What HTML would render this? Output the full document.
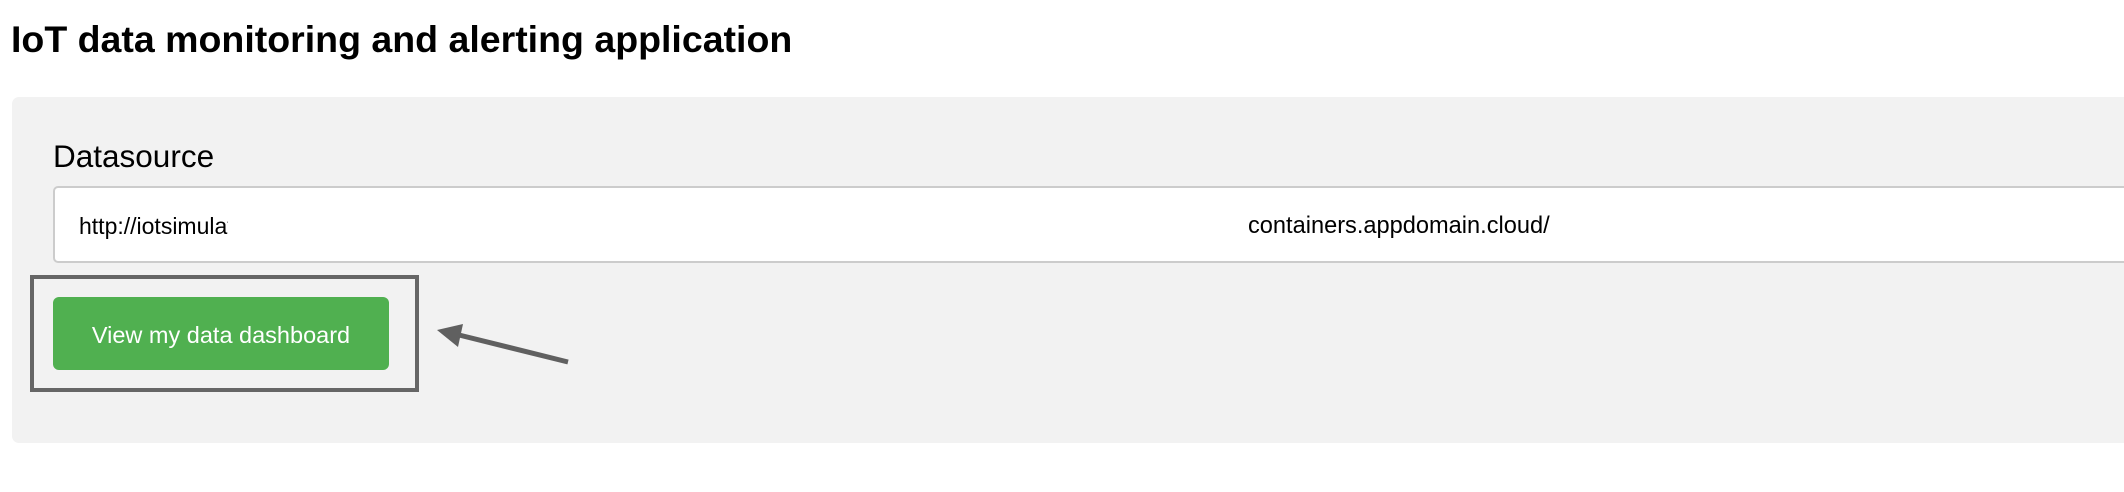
<!DOCTYPE html>
<html><head><style>
html,body{margin:0;padding:0;width:2124px;height:492px;background:#fff;overflow:hidden;font-family:"Liberation Sans",Arial,sans-serif;position:relative}
.a{position:absolute}
</style></head><body>
<div class="a" style="left:11px;top:17px;font-size:37.5px;font-weight:bold;color:#000;line-height:44px;white-space:nowrap">IoT data monitoring and alerting application</div>
<div class="a" style="left:12px;top:97px;width:2140px;height:346px;background:#f2f2f2;border-radius:7px"></div>
<div class="a" style="left:53px;top:138px;font-size:31.5px;color:#000;line-height:36px">Datasource</div>
<div class="a" style="left:53px;top:186px;width:2100px;height:73px;background:#fff;border:2px solid #ccc;border-radius:5px"></div>
<div class="a" style="left:79px;top:211px;font-size:23px;line-height:30px;color:#000;width:149px;overflow:hidden;white-space:nowrap">http://iotsimulator.appdomain</div>
<div class="a" style="left:1248px;top:211px;font-size:23.6px;line-height:30px;color:#000;white-space:nowrap">containers.appdomain.cloud/</div>
<div class="a" style="left:30px;top:275px;width:381px;height:109px;border:4px solid #666"></div>
<div class="a" style="left:53px;top:297px;width:336px;height:73px;background:#50b050;border-radius:6px;color:#fff;font-size:23.5px;line-height:76px;text-align:center">View my data dashboard</div>
<svg class="a" style="left:0;top:0" width="2124" height="492">
<line x1="568" y1="362" x2="455" y2="334" stroke="#606060" stroke-width="5"/>
<polygon points="437,330 463,324 458,347" fill="#606060"/>
</svg>
</body></html>
